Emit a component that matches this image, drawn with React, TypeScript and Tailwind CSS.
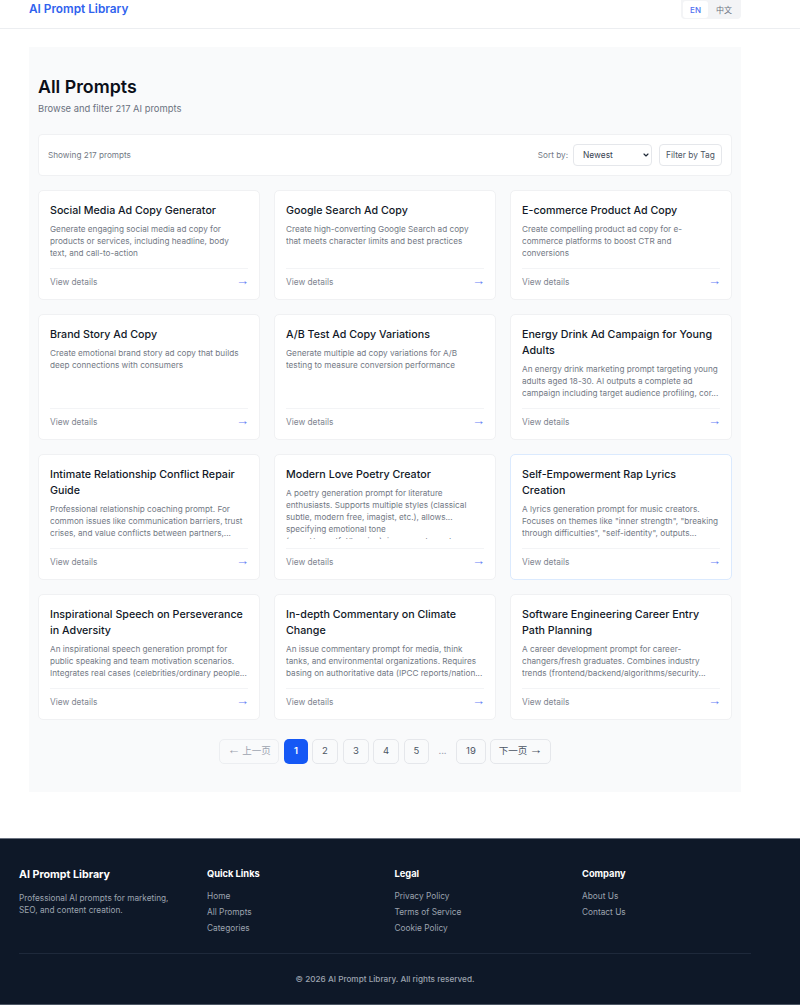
import React from 'react';
import { ChevronDown } from 'lucide-react';

const prompts = [
  { title: 'Social Media Ad Copy Generator', desc: 'Generate engaging social media ad copy for products or services, including headline, body text, and call-to-action' },
  { title: 'Google Search Ad Copy', desc: 'Create high-converting Google Search ad copy that meets character limits and best practices' },
  { title: 'E-commerce Product Ad Copy', desc: 'Create compelling product ad copy for e-commerce platforms to boost CTR and conversions' },
  { title: 'Brand Story Ad Copy', desc: 'Create emotional brand story ad copy that builds deep connections with consumers' },
  { title: 'A/B Test Ad Copy Variations', desc: 'Generate multiple ad copy variations for A/B testing to measure conversion performance' },
  { title: 'Energy Drink Ad Campaign for Young Adults', desc: 'An energy drink marketing prompt targeting young adults aged 18-30. AI outputs a complete ad campaign including target audience profiling, cor...' },
  { title: 'Intimate Relationship Conflict Repair Guide', desc: 'Professional relationship coaching prompt. For common issues like communication barriers, trust crises, and value conflicts between partners,...' },
  { title: 'Modern Love Poetry Creator', desc: 'A poetry generation prompt for literature enthusiasts. Supports multiple styles (classical subtle, modern free, imagist, etc.), allows...\nspecifying emotional tone\n(sweet/regretful/longing), imagery elements' },
  { title: 'Self-Empowerment Rap Lyrics Creation', desc: 'A lyrics generation prompt for music creators. Focuses on themes like "inner strength", "breaking through difficulties", "self-identity", outputs...', active: true },
  { title: 'Inspirational Speech on Perseverance in Adversity', desc: 'An inspirational speech generation prompt for public speaking and team motivation scenarios. Integrates real cases (celebrities/ordinary people...' },
  { title: 'In-depth Commentary on Climate Change', desc: 'An issue commentary prompt for media, think tanks, and environmental organizations. Requires basing on authoritative data (IPCC reports/nation...' },
  { title: 'Software Engineering Career Entry Path Planning', desc: 'A career development prompt for career-changers/fresh graduates. Combines industry trends (frontend/backend/algorithms/security...' },
];

const footerCols = [
  { title: 'Quick Links', links: ['Home', 'All Prompts', 'Categories'] },
  { title: 'Legal', links: ['Privacy Policy', 'Terms of Service', 'Cookie Policy'] },
  { title: 'Company', links: ['About Us', 'Contact Us'] },
];

const pageBtn = 'h-[25px] flex items-center justify-center rounded-[5px] border border-[#e5e7eb] text-[9.5px] text-[#4b5563]';
const arrow = "font-['Liberation_Sans',sans-serif] text-[13px] leading-[12px] pb-[3px]";

const PromptCard = ({ title, desc, active }: { title: string; desc: string; active?: boolean }) => (
  <div className={`flex min-h-0 flex-col rounded-[5px] border bg-white pl-[11px] pr-[10px] pt-[12px] ${active ? 'border-[#dbeafe]' : 'border-[#f0f1f3]'}`}>
    <h3 className="pr-[1px] text-[10.7px] leading-[16px] font-medium text-[#111827]">{title}</h3>
    <p className="mt-[4px] mb-[9px] min-h-0 flex-1 overflow-hidden pr-[2px] text-[8.2px] leading-[12px] whitespace-pre-line text-[#737985]">{desc}</p>
    <div className="mr-[1px] flex h-[31px] flex-none items-center justify-between border-t border-[#f3f4f6] pb-[4px]">
      <span className="text-[8.3px] leading-[12px] text-[#808590]">View details</span>
      <span className={`${arrow} mr-[-1px] mt-[1px] text-[#6680f5]`}>→</span>
    </div>
  </div>
);

export default function App() {
  return (
    <div className="w-[800px] h-[1006px] overflow-hidden bg-white font-['Inter','Noto_Sans_CJK_SC',sans-serif]">
      {/* Header */}
      <header className="flex h-[29px] items-start justify-between border-b border-[#eceef1] px-[29px] pr-[59px]">
        <span className="text-[11.8px] leading-[18px] font-semibold text-[#2f62ee]">AI Prompt Library</span>
        <div className="flex h-[19px] items-center rounded-b-[4px] bg-[#f3f4f6] pl-[2px] pr-[3px]">
          <span className="flex h-[17px] w-[25px] items-center justify-center rounded-[3px] bg-white text-[8px] font-medium text-[#4f6ff0]">EN</span>
          <span className="ml-[2px] flex h-[17px] w-[28px] items-center justify-center text-[8px] text-[#6b7280]">中文</span>
        </div>
      </header>

      {/* Main */}
      <main className="mx-[29px] mt-[18px] h-[745px] w-[712px] bg-[#f9fafb] px-[9px] pt-[28px]">
        <h1 className="text-[17.8px] leading-[24px] font-semibold text-[#0b0f19]">All Prompts</h1>
        <p className="mt-[3px] text-[9.4px] leading-[14px] text-[#6b7280]">Browse and filter 217 AI prompts</p>

        <div className="mt-[18px] flex h-[42px] items-center justify-between rounded-[4px] border border-[#f0f1f3] bg-white pl-[9px] pr-[9px]">
          <span className="text-[8.2px] text-[#737985]">Showing 217 prompts</span>
          <div className="flex items-center">
            <span className="text-[8.2px] text-[#737985]">Sort by:</span>
            <div className="relative ml-[5px]">
              <select className="block h-[22px] w-[79px] appearance-none rounded-[4px] border border-[#e5e7eb] bg-white pl-[9px] text-[8.4px] text-[#374151]" defaultValue="Newest">
                <option>Newest</option>
              </select>
              <ChevronDown size={8} strokeWidth={3.5} className="pointer-events-none absolute right-[2px] top-[7px] text-[#1f2937]" />
            </div>
            <button className="ml-[7px] h-[22px] w-[63px] rounded-[4px] border border-[#e5e7eb] bg-white text-[8.4px] text-[#4b5563]">Filter by Tag</button>
          </div>
        </div>

        <div className="mt-[14px] grid grid-cols-3 grid-rows-[110px_126px_126px_126px] gap-[14px]">
          {prompts.map((p) => (
            <PromptCard key={p.title} {...p} />
          ))}
        </div>

        {/* Pagination */}
        <div className="mt-[19px] flex items-center justify-center">
          <button className={`${pageBtn} w-[60px] gap-[2px] border-[#eceef1] text-[#9ca3af]`}><span className={arrow}>←</span><span>上一页</span></button>
          <button className="ml-[5px] flex h-[25px] w-[24px] items-center justify-center rounded-[5px] bg-[#1558f5] text-[9.5px] font-semibold text-white">1</button>
          <button className={`${pageBtn} ml-[4px] w-[26px]`}>2</button>
          <button className={`${pageBtn} ml-[5px] w-[26px]`}>3</button>
          <button className={`${pageBtn} ml-[4px] w-[26px]`}>4</button>
          <button className={`${pageBtn} ml-[5px] w-[25px]`}>5</button>
          <span className="w-[27px] text-center text-[9.5px] text-[#9ca3af]">...</span>
          <button className={`${pageBtn} w-[30px]`}>19</button>
          <button className={`${pageBtn} ml-[4px] w-[61px] gap-[2px]`}><span>下一页</span><span className={arrow}>→</span></button>
        </div>
      </main>

      {/* Footer */}
      <footer className="mt-[46px] h-[167px] border-t border-b border-t-[#6b7280] border-b-[#4b5563] bg-[#0e1828] px-[19px] pt-[28px]">
        <div className="grid h-[87px] w-[732px] grid-cols-[188px_187.5px_187.5px_169px] border-b border-[#1e293b]">
          <div>
            <div className="pt-[1px] text-[10.7px] leading-[14px] font-bold text-white">AI Prompt Library</div>
            <p className="mt-[10px] w-[160px] text-[8.25px] leading-[12px] text-[#9ca3af]">Professional AI prompts for marketing, SEO, and content creation.</p>
          </div>
          {footerCols.map((col) => (
            <div key={col.title}>
              <div className="text-[9.3px] leading-[13px] font-bold text-white">{col.title}</div>
              <ul className="mt-[10px] flex flex-col gap-[4.2px]">
                {col.links.map((l) => (
                  <li key={l} className="text-[8.3px] leading-[12px] text-[#9ca3af]">{l}</li>
                ))}
              </ul>
            </div>
          ))}
        </div>
        <p className="mt-[19px] w-[732px] text-center text-[8.2px] leading-[12px] font-medium text-[#9ca3af]">© 2026 AI Prompt Library. All rights reserved.</p>
      </footer>
    </div>
  );
}
